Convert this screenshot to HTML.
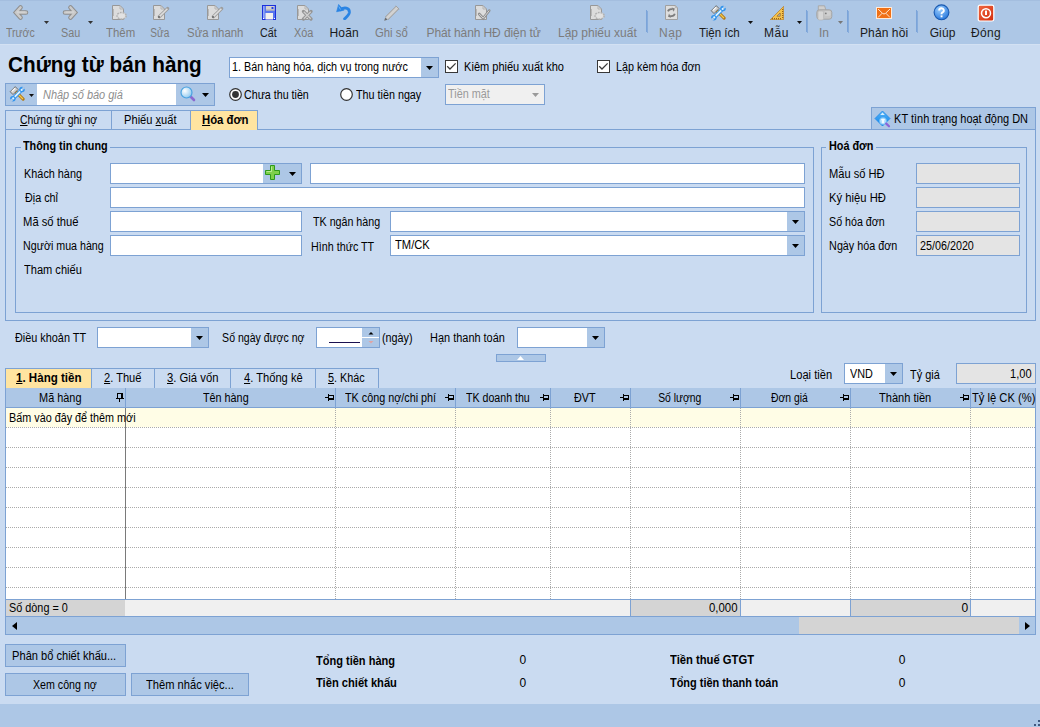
<!DOCTYPE html>
<html><head><meta charset="utf-8"><style>
html,body{margin:0;padding:0;}
body{width:1040px;height:727px;position:relative;overflow:hidden;background:#CADBF1;font-family:"Liberation Sans",sans-serif;}
.a{position:absolute;}
.t{position:absolute;white-space:pre;}
u{text-decoration:underline;text-underline-offset:1px;}
</style></head><body>
<div class="a" style="left:0px;top:0px;width:1040px;height:44px;background:#ADC7E6;"></div>
<div class="a" style="left:0px;top:0px;width:1040px;height:1px;background:#A4BEDF;"></div>
<div class="a" style="left:0px;top:44px;width:1040px;height:1px;background:#D3E1F3;"></div>
<div class="t" style="left:6.00px;top:26.84px;font-size:12px;line-height:12px;font-weight:400;font-style:normal;color:#7C7C7C;transform:scaleX(0.8788);transform-origin:0px 0;">Trước</div>
<div class="t" style="left:61.00px;top:26.84px;font-size:12px;line-height:12px;font-weight:400;font-style:normal;color:#7C7C7C;transform:scaleX(0.9000);transform-origin:1px 0;">Sau</div>
<div class="t" style="left:106.00px;top:26.84px;font-size:12px;line-height:12px;font-weight:400;font-style:normal;color:#7C7C7C;transform:scaleX(0.9500);transform-origin:0px 0;">Thêm</div>
<div class="t" style="left:150.00px;top:26.84px;font-size:12px;line-height:12px;font-weight:400;font-style:normal;color:#7C7C7C;transform:scaleX(0.8409);transform-origin:1px 0;">Sửa</div>
<div class="t" style="left:187.00px;top:26.84px;font-size:12px;line-height:12px;font-weight:400;font-style:normal;color:#7C7C7C;transform:scaleX(0.9483);transform-origin:1px 0;">Sửa nhanh</div>
<div class="t" style="left:260.00px;top:26.84px;font-size:12px;line-height:12px;font-weight:400;font-style:normal;color:#1A1A1A;transform:scaleX(0.8947);transform-origin:0px 0;">Cất</div>
<div class="t" style="left:294.00px;top:26.84px;font-size:12px;line-height:12px;font-weight:400;font-style:normal;color:#7C7C7C;transform:scaleX(0.9091);transform-origin:0px 0;">Xóa</div>
<div class="t" style="left:329.50px;top:26.84px;font-size:12px;line-height:12px;font-weight:400;font-style:normal;color:#1A1A1A;letter-spacing:0.167px;">Hoãn</div>
<div class="t" style="left:375.00px;top:26.84px;font-size:12px;line-height:12px;font-weight:400;font-style:normal;color:#7C7C7C;transform:scaleX(0.9429);transform-origin:0px 0;">Ghi sổ</div>
<div class="t" style="left:426.50px;top:26.84px;font-size:12px;line-height:12px;font-weight:400;font-style:normal;color:#7C7C7C;letter-spacing:-0.100px;">Phát hành HĐ điện tử</div>
<div class="t" style="left:558.00px;top:26.84px;font-size:12px;line-height:12px;font-weight:400;font-style:normal;color:#7C7C7C;">Lập phiếu xuất</div>
<div class="t" style="left:659.00px;top:26.84px;font-size:12px;line-height:12px;font-weight:400;font-style:normal;color:#7C7C7C;letter-spacing:0.500px;">Nạp</div>
<div class="t" style="left:699.00px;top:26.84px;font-size:12px;line-height:12px;font-weight:400;font-style:normal;color:#1A1A1A;transform:scaleX(0.9643);transform-origin:0px 0;">Tiện ích</div>
<div class="t" style="left:764.00px;top:26.84px;font-size:12px;line-height:12px;font-weight:400;font-style:normal;color:#1A1A1A;letter-spacing:0.500px;">Mẫu</div>
<div class="t" style="left:819.00px;top:26.84px;font-size:12px;line-height:12px;font-weight:400;font-style:normal;color:#7C7C7C;">In</div>
<div class="t" style="left:860.00px;top:26.84px;font-size:12px;line-height:12px;font-weight:400;font-style:normal;color:#1A1A1A;letter-spacing:0.100px;">Phản hồi</div>
<div class="t" style="left:929.70px;top:26.84px;font-size:12px;line-height:12px;font-weight:400;font-style:normal;color:#1A1A1A;letter-spacing:0.100px;">Giúp</div>
<div class="t" style="left:971.00px;top:26.84px;font-size:12px;line-height:12px;font-weight:400;font-style:normal;color:#1A1A1A;letter-spacing:0.333px;">Đóng</div>
<div class="a" style="left:646px;top:10px;width:1px;height:22px;background:#7BA4D9;"></div>
<div class="a" style="left:647px;top:11px;width:1px;height:22px;background:#86ACDC;"></div>
<div class="a" style="left:806px;top:10px;width:1px;height:22px;background:#7BA4D9;"></div>
<div class="a" style="left:807px;top:11px;width:1px;height:22px;background:#86ACDC;"></div>
<div class="a" style="left:847px;top:10px;width:1px;height:22px;background:#7BA4D9;"></div>
<div class="a" style="left:848px;top:11px;width:1px;height:22px;background:#86ACDC;"></div>
<div class="a" style="left:916px;top:10px;width:1px;height:22px;background:#7BA4D9;"></div>
<div class="a" style="left:917px;top:11px;width:1px;height:22px;background:#86ACDC;"></div>
<svg class="a" style="left:44px;top:21px" width="5" height="3" viewBox="0 0 5 3"><path d="M0 0H5L2.5 3Z" fill="#333"/></svg>
<svg class="a" style="left:88px;top:21px" width="5" height="3" viewBox="0 0 5 3"><path d="M0 0H5L2.5 3Z" fill="#333"/></svg>
<svg class="a" style="left:748px;top:21px" width="5" height="3" viewBox="0 0 5 3"><path d="M0 0H5L2.5 3Z" fill="#111"/></svg>
<svg class="a" style="left:797px;top:21px" width="5" height="3" viewBox="0 0 5 3"><path d="M0 0H5L2.5 3Z" fill="#111"/></svg>
<svg class="a" style="left:838px;top:21px" width="5" height="3" viewBox="0 0 5 3"><path d="M0 0H5L2.5 3Z" fill="#777"/></svg>
<svg class="a" style="left:10px;top:2px" width="24" height="22" viewBox="0 0 24 22"><g><path d="M10.5 5.5L6 10.5L10.5 15.5M6 10.5H16" fill="none" stroke="#8E8E8E" stroke-width="4.6" stroke-linecap="round" stroke-linejoin="miter"/><path d="M10.5 5.5L6 10.5L10.5 15.5M6 10.5H16" fill="none" stroke="#CACACA" stroke-width="2.6" stroke-linecap="round" stroke-linejoin="miter"/><path d="M7 10H15.5" stroke="#DEDEDE" stroke-width="0.8"/></g></svg>
<svg class="a" style="left:57px;top:2px" width="24" height="22" viewBox="0 0 24 22"><g transform="translate(24 0) scale(-1 1)"><path d="M10.5 5.5L6 10.5L10.5 15.5M6 10.5H16" fill="none" stroke="#8E8E8E" stroke-width="4.6" stroke-linecap="round" stroke-linejoin="miter"/><path d="M10.5 5.5L6 10.5L10.5 15.5M6 10.5H16" fill="none" stroke="#CACACA" stroke-width="2.6" stroke-linecap="round" stroke-linejoin="miter"/><path d="M7 10H15.5" stroke="#DEDEDE" stroke-width="0.8"/></g></svg>
<svg class="a" style="left:112px;top:5px" width="20" height="16" viewBox="0 0 20 16"><path d="M0.5 0.5H8L11.5 4V14.5H0.5Z" fill="#DCDCDC" stroke="#989898"/><path d="M8 0.5V4H11.5" fill="none" stroke="#B4B4B4"/><rect x="1" y="4" width="1" height="7" fill="#B8B8B8"/><ellipse cx="9.6" cy="10.8" rx="4.6" ry="3.4" fill="#D4D4D4" stroke="#B0B0B0" stroke-width="1.4" stroke-dasharray="1.6 1.2"/><ellipse cx="9.6" cy="10.8" rx="3.4" ry="2.3" fill="#E2E2E2"/></svg>
<svg class="a" style="left:153px;top:5px" width="20" height="16" viewBox="0 0 20 16"><path d="M0.5 0.5H8L11.5 4V14.5H0.5Z" fill="#DCDCDC" stroke="#989898"/><path d="M8 0.5V4H11.5" fill="none" stroke="#B4B4B4"/><rect x="1" y="4" width="1" height="7" fill="#B8B8B8"/><path d="M6.4 11.6L14.6 3.6" stroke="#9C9C9C" stroke-width="3.4" stroke-linecap="round"/><path d="M6.6 11.4L14.4 3.8" stroke="#DEDEDE" stroke-width="1.6"/><circle cx="6" cy="12" r="0.9" fill="#666"/></svg>
<svg class="a" style="left:207px;top:5px" width="20" height="16" viewBox="0 0 20 16"><path d="M0.5 0.5H8L11.5 4V14.5H0.5Z" fill="#DCDCDC" stroke="#989898"/><path d="M8 0.5V4H11.5" fill="none" stroke="#B4B4B4"/><rect x="1" y="4" width="1" height="7" fill="#B8B8B8"/><path d="M6.4 11.6L14.6 3.6" stroke="#9C9C9C" stroke-width="3.4" stroke-linecap="round"/><path d="M6.6 11.4L14.4 3.8" stroke="#DEDEDE" stroke-width="1.6"/><circle cx="6" cy="12" r="0.9" fill="#666"/></svg>
<svg class="a" style="left:262px;top:5px" width="14" height="15" viewBox="0 0 14 15"><rect x="0.5" y="0.5" width="13" height="14" fill="#5876EE" stroke="#1C30DC"/><rect x="1" y="1" width="1.6" height="13" fill="#93A8F6"/><rect x="4" y="1" width="8.5" height="4.5" fill="#D6D2CC"/><rect x="4" y="4.5" width="8.5" height="1" fill="#A8A8B8"/><rect x="9.5" y="2" width="2" height="2" rx="0.6" fill="#2040E0"/><rect x="3.5" y="8" width="7.5" height="6.5" fill="#F4F2EE"/><rect x="1" y="13" width="1" height="1" fill="#FFF"/><rect x="12" y="13" width="1" height="1" fill="#FFF"/></svg>
<svg class="a" style="left:297px;top:5px" width="20" height="16" viewBox="0 0 20 16"><path d="M0.5 0.5H8L11.5 4V14.5H0.5Z" fill="#DCDCDC" stroke="#989898"/><path d="M8 0.5V4H11.5" fill="none" stroke="#B4B4B4"/><rect x="1" y="4" width="1" height="7" fill="#B8B8B8"/><path d="M6.5 6.5L14 14M14 6.5L6.5 14" stroke="#959595" stroke-width="3.2" stroke-linecap="round"/><path d="M6.8 6.8L13.7 13.7M13.7 6.8L6.8 13.7" stroke="#CFCFCF" stroke-width="1.3"/></svg>
<svg class="a" style="left:336px;top:3px" width="16" height="17" viewBox="0 0 16 17"><path d="M4.8 6.8C8 3.8 13.6 4.6 13.4 9.4C13.2 12 10.8 13.8 8.6 15.8" fill="none" stroke="#2A84E4" stroke-width="2.8" stroke-linecap="round"/><path d="M0.6 8.8L2.6 1.4L8 7.2Z" fill="#2A84E4" stroke="#2A84E4" stroke-width="0.6" stroke-linejoin="round"/><path d="M2.8 3.5L4.5 6.5" stroke="#7CC0F8" stroke-width="0.8"/></svg>
<svg class="a" style="left:383px;top:4px" width="18" height="18" viewBox="0 0 18 18"><path d="M3.6 14.4L14.6 3.4" stroke="#A2A2A2" stroke-width="4.6"/><path d="M3.8 14.2L14.4 3.6" stroke="#D2D2D2" stroke-width="2.8"/><path d="M12.8 1.8L16.2 5.2" stroke="#A2A2A2" stroke-width="1"/><path d="M1.2 16.8L2.2 13.4L4.6 15.8Z" fill="#6E6E6E"/></svg>
<svg class="a" style="left:475px;top:5px" width="20" height="16" viewBox="0 0 20 16"><path d="M0.5 0.5H8L11.5 4V14.5H0.5Z" fill="#DCDCDC" stroke="#989898"/><path d="M8 0.5V4H11.5" fill="none" stroke="#B4B4B4"/><rect x="1" y="4" width="1" height="7" fill="#B8B8B8"/><path d="M4.2 9L8.2 13.2L14.2 5.6" fill="none" stroke="#8E8E8E" stroke-width="2.6" stroke-linecap="round"/><path d="M4.2 9L8.2 13.2L14.2 5.6" fill="none" stroke="#D4D4D4" stroke-width="1"/></svg>
<svg class="a" style="left:590px;top:5px" width="20" height="16" viewBox="0 0 20 16"><path d="M0.5 0.5H8L11.5 4V14.5H0.5Z" fill="#DCDCDC" stroke="#989898"/><path d="M8 0.5V4H11.5" fill="none" stroke="#B4B4B4"/><rect x="1" y="4" width="1" height="7" fill="#B8B8B8"/><ellipse cx="9.6" cy="10.8" rx="4.6" ry="3.4" fill="#D4D4D4" stroke="#B0B0B0" stroke-width="1.4" stroke-dasharray="1.6 1.2"/><ellipse cx="9.6" cy="10.8" rx="3.4" ry="2.3" fill="#E2E2E2"/></svg>
<svg class="a" style="left:665px;top:5px" width="14" height="16" viewBox="0 0 14 16"><path d="M0.5 0.5H10.3L12.5 2.7V14.5H0.5Z" fill="#DEDEDE" stroke="#A0A0A0"/><path d="M10.3 0.5V2.7H12.5" fill="#C0C0C0" stroke="#B0B0B0" stroke-width="0.8"/><path d="M3 6.4C3.6 4.6 5.6 3.9 7.6 4.3" fill="none" stroke="#7C7C7C" stroke-width="1.8"/><path d="M6.6 2.4L9.8 3.4L8.8 6.8Z" fill="#7C7C7C"/><path d="M9.8 8.8C9.2 10.6 7.2 11.3 5.2 10.9" fill="none" stroke="#7C7C7C" stroke-width="1.8"/><path d="M6.2 12.8L3 11.8L4 8.4Z" fill="#7C7C7C"/></svg>
<svg class="a" style="left:710px;top:4px" width="18" height="18" viewBox="0 0 18 18"><g transform="translate(0.9 0.9) scale(0.92)"><path d="M6.5 6.5L14.4 14.4" stroke="#B27A1A" stroke-width="3.4" stroke-linecap="round"/><path d="M6.8 6.8L14.2 14.2" stroke="#F4CC50" stroke-width="1.3"/><path d="M5.8 0.8L8.9 3.9L3.4 9.4L0.3 6.3Z" fill="#CFCFCF" stroke="#5E5E5E" stroke-width="0.9" stroke-linejoin="round"/><path d="M2.2 6L5.6 2.6" stroke="#FAFAFA" stroke-width="1.3"/><path d="M4.2 13L12.2 5" stroke="#3394EC" stroke-width="4" stroke-linecap="round"/><path d="M4.4 12.8L12 5.2" stroke="#E2F4FF" stroke-width="2"/><circle cx="13.2" cy="4" r="3" fill="#3394EC"/><circle cx="14.7" cy="2.5" r="1.4" fill="#ADC7E6"/><circle cx="3.2" cy="14" r="3" fill="#3394EC"/><circle cx="1.7" cy="15.5" r="1.4" fill="#ADC7E6"/><circle cx="12.8" cy="4.4" r="1.2" fill="#E2F4FF"/><circle cx="3.6" cy="13.6" r="1.2" fill="#E2F4FF"/></g></svg>
<svg class="a" style="left:770px;top:6px" width="14" height="14" viewBox="0 0 14 14"><path d="M0.3 13.7L13.7 0.3V13.7Z" fill="#F4C24E" stroke="#B47A26" stroke-width="0.7" stroke-linejoin="round"/><path d="M7 10.2L10.2 7V10.2Z" fill="#ADC7E6" stroke="#A06A1E" stroke-width="0.8"/><rect x="2" y="12" width="1" height="1.3" fill="#9A6418"/><rect x="4" y="12" width="1" height="1.3" fill="#9A6418"/><rect x="6" y="12" width="1" height="1.3" fill="#9A6418"/><rect x="8" y="12" width="1" height="1.3" fill="#9A6418"/><rect x="10" y="12" width="1" height="1.3" fill="#9A6418"/><rect x="12" y="3" width="1.3" height="1" fill="#9A6418"/><rect x="12" y="5" width="1.3" height="1" fill="#9A6418"/><rect x="12" y="7" width="1.3" height="1" fill="#9A6418"/><rect x="12" y="9" width="1.3" height="1" fill="#9A6418"/><rect x="12" y="11" width="1.3" height="1" fill="#9A6418"/></svg>
<svg class="a" style="left:816px;top:5px" width="17" height="16" viewBox="0 0 17 16"><path d="M2.3 0.8H8.6L10 5.5H2.3Z" fill="#CFCFCF" stroke="#A6A6A6" stroke-width="0.9" stroke-linejoin="round"/><rect x="0.8" y="4.8" width="15" height="9.4" rx="2.6" fill="#C4C4C4" stroke="#A2A2A2" stroke-width="0.9"/><rect x="2" y="6" width="5.6" height="9" rx="1.4" fill="#D6D6D6" stroke="#B4B4B4" stroke-width="0.6"/><rect x="8.6" y="6" width="6" height="4.8" rx="1" fill="#CFCFCF"/><circle cx="9.8" cy="8.4" r="0.9" fill="#7E7E7E"/></svg>
<svg class="a" style="left:876px;top:7px" width="16" height="12" viewBox="0 0 16 12"><rect x="0.5" y="0.5" width="15" height="11" fill="#F07016" stroke="#FFEBDA"/><path d="M2 2L6.6 6.4Q8 7.6 9.4 6.4L14 2M2 10.5L6.2 6.2M14 10.5L9.8 6.2" fill="none" stroke="#FFE4CC" stroke-width="1"/></svg>
<svg class="a" style="left:933px;top:4px" width="17" height="17" viewBox="0 0 17 17"><defs><radialGradient id="hg" cx="0.4" cy="0.3" r="0.8"><stop offset="0" stop-color="#9ED0FF"/><stop offset="1" stop-color="#1C6FD8"/></radialGradient></defs><circle cx="8.5" cy="8.3" r="7.4" fill="url(#hg)" stroke="#1758B0" stroke-width="1.1"/><path d="M6.2 6.4A2.3 2.2 0 1 1 9.2 8.5C8.7 8.9 8.5 9.3 8.5 10.3" fill="none" stroke="#FFF" stroke-width="1.9"/><rect x="7.6" y="11.4" width="1.9" height="1.9" fill="#FFF"/></svg>
<svg class="a" style="left:977px;top:4px" width="18" height="18" viewBox="0 0 18 18"><defs><linearGradient id="cg" x1="0" y1="0" x2="1" y2="1"><stop offset="0" stop-color="#F06A44"/><stop offset="1" stop-color="#D22C0C"/></linearGradient></defs><rect x="1.2" y="1.2" width="15.6" height="15.8" rx="1.8" fill="url(#cg)" stroke="#FFF" stroke-width="1.2"/><circle cx="9" cy="9.2" r="4.5" fill="none" stroke="#FFF" stroke-width="1.5"/><rect x="8" y="6.6" width="2" height="4.4" fill="#FFF"/></svg>
<div class="t" style="left:8.30px;top:53.72px;font-size:21.6px;line-height:21.6px;font-weight:700;font-style:normal;color:#000;transform:scaleX(0.9610);transform-origin:1px 0;">Chứng từ bán hàng</div>
<div class="a" style="left:229px;top:57px;width:210px;height:21px;background:#FFFFFF;box-sizing:border-box;border:1px solid #7DA2D3;"></div>
<div class="a" style="left:421px;top:58px;width:17px;height:19px;background:#ADC7E6;"></div>
<svg class="a" style="left:426px;top:66px" width="7" height="4" viewBox="0 0 7 4"><path d="M0 0H7L3.5 4Z" fill="#000"/></svg>
<div class="t" style="left:232.00px;top:60.84px;font-size:12px;line-height:12px;font-weight:400;font-style:normal;color:#000000;transform:scaleX(0.8995);transform-origin:1px 0;">1. Bán hàng hóa, dịch vụ trong nước</div>
<svg class="a" style="left:445px;top:60px" width="13" height="13" viewBox="0 0 13 13"><rect x="0.5" y="0.5" width="12" height="12" fill="#FFF" stroke="#383838"/><path d="M2.2 6.2L5 9L10.6 3.4" fill="none" stroke="#3A3A3A" stroke-width="1.25"/></svg>
<div class="t" style="left:463.80px;top:60.84px;font-size:12px;line-height:12px;font-weight:400;font-style:normal;color:#000000;transform:scaleX(0.9185);transform-origin:1px 0;">Kiêm phiếu xuất kho</div>
<svg class="a" style="left:597px;top:60px" width="13" height="13" viewBox="0 0 13 13"><rect x="0.5" y="0.5" width="12" height="12" fill="#FFF" stroke="#383838"/><path d="M2.2 6.2L5 9L10.6 3.4" fill="none" stroke="#3A3A3A" stroke-width="1.25"/></svg>
<div class="t" style="left:616.00px;top:60.84px;font-size:12px;line-height:12px;font-weight:400;font-style:normal;color:#000000;transform:scaleX(0.8978);transform-origin:1px 0;">Lập kèm hóa đơn</div>
<div class="a" style="left:5px;top:83px;width:210px;height:23px;background:#FFFFFF;box-sizing:border-box;border:1px solid #7DA2D3;"></div>
<div class="a" style="left:6px;top:84px;width:31px;height:21px;background:#ADC7E6;"></div>
<div class="a" style="left:176px;top:84px;width:38px;height:21px;background:#ADC7E6;"></div>
<svg class="a" style="left:9px;top:85px" width="18" height="18" viewBox="0 0 18 18"><g transform="translate(0.9 0.9) scale(0.92)"><path d="M6.5 6.5L14.4 14.4" stroke="#B27A1A" stroke-width="3.4" stroke-linecap="round"/><path d="M6.8 6.8L14.2 14.2" stroke="#F4CC50" stroke-width="1.3"/><path d="M5.8 0.8L8.9 3.9L3.4 9.4L0.3 6.3Z" fill="#CFCFCF" stroke="#5E5E5E" stroke-width="0.9" stroke-linejoin="round"/><path d="M2.2 6L5.6 2.6" stroke="#FAFAFA" stroke-width="1.3"/><path d="M4.2 13L12.2 5" stroke="#3394EC" stroke-width="4" stroke-linecap="round"/><path d="M4.4 12.8L12 5.2" stroke="#E2F4FF" stroke-width="2"/><circle cx="13.2" cy="4" r="3" fill="#3394EC"/><circle cx="14.7" cy="2.5" r="1.4" fill="#ADC7E6"/><circle cx="3.2" cy="14" r="3" fill="#3394EC"/><circle cx="1.7" cy="15.5" r="1.4" fill="#ADC7E6"/><circle cx="12.8" cy="4.4" r="1.2" fill="#E2F4FF"/><circle cx="3.6" cy="13.6" r="1.2" fill="#E2F4FF"/></g></svg>
<svg class="a" style="left:29px;top:94px" width="5" height="3" viewBox="0 0 5 3"><path d="M0 0H5L2.5 3Z" fill="#111"/></svg>
<div class="t" style="left:43.00px;top:88.84px;font-size:12px;line-height:12px;font-weight:400;font-style:italic;color:#8E8E8E;transform:scaleX(0.9138);transform-origin:0px 0;">Nhập số báo giá</div>
<svg class="a" style="left:180px;top:86px" width="16" height="16" viewBox="0 0 16 16"><defs><radialGradient id="mg" cx="0.35" cy="0.35" r="0.7"><stop offset="0" stop-color="#FFFFFF"/><stop offset="1" stop-color="#8CC8F0"/></radialGradient></defs><path d="M10 10L14 14" stroke="#8A6AD0" stroke-width="2.6" stroke-linecap="round"/><circle cx="6.5" cy="6.5" r="5.5" fill="url(#mg)" stroke="#4AA2E0" stroke-width="1.2"/></svg>
<svg class="a" style="left:202px;top:93px" width="7" height="4" viewBox="0 0 7 4"><path d="M0 0H7L3.5 4Z" fill="#000"/></svg>
<svg class="a" style="left:229px;top:88px" width="13" height="13" viewBox="0 0 13 13"><circle cx="6.5" cy="6.5" r="5.8" fill="#FFF" stroke="#333" stroke-width="1.2"/><circle cx="6.5" cy="6.5" r="3.4" fill="#333"/></svg>
<div class="t" style="left:244.40px;top:88.84px;font-size:12px;line-height:12px;font-weight:400;font-style:normal;color:#000000;transform:scaleX(0.8903);transform-origin:0px 0;">Chưa thu tiền</div>
<svg class="a" style="left:340px;top:88px" width="13" height="13" viewBox="0 0 13 13"><circle cx="6.5" cy="6.5" r="5.8" fill="#FFF" stroke="#333" stroke-width="1.2"/></svg>
<div class="t" style="left:355.50px;top:88.84px;font-size:12px;line-height:12px;font-weight:400;font-style:normal;color:#000000;transform:scaleX(0.8973);transform-origin:0px 0;">Thu tiền ngay</div>
<div class="a" style="left:445px;top:84px;width:100px;height:21px;background:#F0F0F0;box-sizing:border-box;border:1px solid #7DA2D3;"></div>
<svg class="a" style="left:532px;top:93px" width="7" height="4" viewBox="0 0 7 4"><path d="M0 0H7L3.5 4Z" fill="#9A9A9A"/></svg>
<div class="t" style="left:448.00px;top:87.84px;font-size:12px;line-height:12px;font-weight:400;font-style:normal;color:#9A9A9A;transform:scaleX(0.9043);transform-origin:0px 0;">Tiền mặt</div>
<div class="a" style="left:5px;top:129px;width:1031px;height:192px;box-sizing:border-box;border:1px solid #7DA2D3;"></div>
<div class="a" style="left:5px;top:110px;width:107px;height:20px;background:#CADBF1;box-sizing:border-box;border:1px solid #7DA2D3;"></div>
<div class="a" style="left:111px;top:110px;width:80px;height:20px;background:#CADBF1;box-sizing:border-box;border:1px solid #7DA2D3;"></div>
<div class="a" style="left:190px;top:110px;width:68px;height:20px;background:#FFE4A0;box-sizing:border-box;border:1px solid #7DA2D3;"></div>
<div class="a" style="left:191px;top:129px;width:66px;height:1px;background:#FFE4A0;"></div>
<div class="t" style="left:20.00px;top:113.84px;font-size:12px;line-height:12px;font-weight:400;font-style:normal;color:#000000;transform:scaleX(0.8708);transform-origin:0px 0;"><u>C</u>hứng từ ghi nợ</div>
<div class="t" style="left:124.00px;top:113.84px;font-size:12px;line-height:12px;font-weight:400;font-style:normal;color:#000000;transform:scaleX(0.9250);transform-origin:1px 0;">Phiếu <u>x</u>uất</div>
<div class="t" style="left:201.60px;top:113.84px;font-size:12px;line-height:12px;font-weight:700;font-style:normal;color:#000000;transform:scaleX(0.9449);transform-origin:0px 0;"><u>H</u>óa đơn</div>
<div class="a" style="left:871px;top:107px;width:165px;height:23px;background:#ADC7E6;box-sizing:border-box;border:1px solid #7DA2D3;"></div>
<svg class="a" style="left:874px;top:110px" width="18" height="18" viewBox="0 0 18 18"><defs><linearGradient id="kg" x1="0" y1="0" x2="0" y2="1"><stop offset="0" stop-color="#58B4F6"/><stop offset="1" stop-color="#0C84EC"/></linearGradient></defs><path d="M8.5 1L16 8.5L8.5 16L1 8.5Z" fill="url(#kg)" stroke="#1A86E8" stroke-width="0.8" stroke-linejoin="round"/><path d="M8.5 2.6L10.8 5H6.2Z" fill="#D8F0FF"/><circle cx="9" cy="11" r="3.5" fill="#B4E0FF" stroke="#6CBAF2" stroke-width="0.8"/><rect x="8.2" y="9.6" width="1.6" height="3.6" fill="#FFF"/><rect x="7.2" y="9.2" width="3.6" height="1" fill="#FFF"/><path d="M12.2 13.6L15 16.3" stroke="#8A64D8" stroke-width="2.2" stroke-linecap="round"/></svg>
<div class="t" style="left:894.00px;top:112.84px;font-size:12px;line-height:12px;font-weight:400;font-style:normal;color:#000000;transform:scaleX(0.9138);transform-origin:1px 0;">KT tình trạng hoạt động DN</div>
<div class="a" style="left:15px;top:147px;width:799px;height:166px;box-sizing:border-box;border:1px solid #7DA2D3;"></div>
<div class="a" style="left:21px;top:146px;width:89px;height:3px;background:#CADBF1;"></div>
<div class="t" style="left:23.00px;top:139.84px;font-size:12px;line-height:12px;font-weight:700;font-style:normal;color:#000000;transform:scaleX(0.9011);transform-origin:0px 0;">Thông tin chung</div>
<div class="a" style="left:821px;top:147px;width:206px;height:166px;box-sizing:border-box;border:1px solid #7DA2D3;"></div>
<div class="a" style="left:826px;top:146px;width:50px;height:3px;background:#CADBF1;"></div>
<div class="t" style="left:828.75px;top:139.84px;font-size:12px;line-height:12px;font-weight:700;font-style:normal;color:#000000;transform:scaleX(0.9031);transform-origin:0px 0;">Hoá đơn</div>
<div class="t" style="left:23.80px;top:167.84px;font-size:12px;line-height:12px;font-weight:400;font-style:normal;color:#000000;transform:scaleX(0.9032);transform-origin:1px 0;">Khách hàng</div>
<div class="a" style="left:110px;top:163px;width:192px;height:21px;background:#FFFFFF;box-sizing:border-box;border:1px solid #7DA2D3;"></div>
<div class="a" style="left:263px;top:164px;width:38px;height:19px;background:#ADC7E6;"></div>
<svg class="a" style="left:265px;top:165px" width="16" height="16" viewBox="0 0 16 16"><path d="M5.5 0.5H9.5V5.5H14.5V9.5H9.5V14.5H5.5V9.5H0.5V5.5H5.5Z" fill="#7ED04A" stroke="#2E9A1A"/><path d="M6.5 1.5V6.5H1.5" fill="none" stroke="#C8F0A8" stroke-width="0.8"/></svg>
<svg class="a" style="left:289px;top:172px" width="7" height="4" viewBox="0 0 7 4"><path d="M0 0H7L3.5 4Z" fill="#000"/></svg>
<div class="a" style="left:310px;top:163px;width:495px;height:21px;background:#FFFFFF;box-sizing:border-box;border:1px solid #7DA2D3;"></div>
<div class="t" style="left:24.80px;top:191.84px;font-size:12px;line-height:12px;font-weight:400;font-style:normal;color:#000000;transform:scaleX(0.8973);transform-origin:0px 0;">Địa chỉ</div>
<div class="a" style="left:110px;top:187px;width:695px;height:21px;background:#FFFFFF;box-sizing:border-box;border:1px solid #7DA2D3;"></div>
<div class="t" style="left:23.40px;top:215.84px;font-size:12px;line-height:12px;font-weight:400;font-style:normal;color:#000000;transform:scaleX(0.9345);transform-origin:1px 0;">Mã số thuế</div>
<div class="a" style="left:110px;top:211px;width:192px;height:21px;background:#FFFFFF;box-sizing:border-box;border:1px solid #7DA2D3;"></div>
<div class="t" style="left:312.50px;top:215.84px;font-size:12px;line-height:12px;font-weight:400;font-style:normal;color:#000000;transform:scaleX(0.8907);transform-origin:0px 0;">TK ngân hàng</div>
<div class="a" style="left:390px;top:211px;width:415px;height:21px;background:#FFFFFF;box-sizing:border-box;border:1px solid #7DA2D3;"></div>
<div class="a" style="left:787px;top:212px;width:17px;height:19px;background:#ADC7E6;"></div>
<svg class="a" style="left:792px;top:220px" width="7" height="4" viewBox="0 0 7 4"><path d="M0 0H7L3.5 4Z" fill="#000"/></svg>
<div class="t" style="left:23.40px;top:239.84px;font-size:12px;line-height:12px;font-weight:400;font-style:normal;color:#000000;transform:scaleX(0.8899);transform-origin:1px 0;">Người mua hàng</div>
<div class="a" style="left:110px;top:235px;width:192px;height:21px;background:#FFFFFF;box-sizing:border-box;border:1px solid #7DA2D3;"></div>
<div class="t" style="left:311.40px;top:240.84px;font-size:12px;line-height:12px;font-weight:400;font-style:normal;color:#000000;transform:scaleX(0.8943);transform-origin:1px 0;">Hình thức TT</div>
<div class="a" style="left:390px;top:235px;width:415px;height:21px;background:#FFFFFF;box-sizing:border-box;border:1px solid #7DA2D3;"></div>
<div class="a" style="left:787px;top:236px;width:17px;height:19px;background:#ADC7E6;"></div>
<svg class="a" style="left:792px;top:244px" width="7" height="4" viewBox="0 0 7 4"><path d="M0 0H7L3.5 4Z" fill="#000"/></svg>
<div class="t" style="left:395.00px;top:238.84px;font-size:12px;line-height:12px;font-weight:400;font-style:normal;color:#000000;transform:scaleX(0.9324);transform-origin:0px 0;">TM/CK</div>
<div class="t" style="left:24.40px;top:263.84px;font-size:12px;line-height:12px;font-weight:400;font-style:normal;color:#000000;transform:scaleX(0.9218);transform-origin:0px 0;">Tham chiếu</div>
<div class="t" style="left:829.40px;top:167.84px;font-size:12px;line-height:12px;font-weight:400;font-style:normal;color:#000000;transform:scaleX(0.9254);transform-origin:1px 0;">Mẫu số HĐ</div>
<div class="a" style="left:916px;top:163px;width:104px;height:21px;background:#E4E4E4;box-sizing:border-box;border:1px solid #7DA2D3;"></div>
<div class="t" style="left:829.40px;top:191.84px;font-size:12px;line-height:12px;font-weight:400;font-style:normal;color:#000000;transform:scaleX(0.9356);transform-origin:1px 0;">Ký hiệu HĐ</div>
<div class="a" style="left:916px;top:187px;width:104px;height:21px;background:#E4E4E4;box-sizing:border-box;border:1px solid #7DA2D3;"></div>
<div class="t" style="left:829.40px;top:215.84px;font-size:12px;line-height:12px;font-weight:400;font-style:normal;color:#000000;transform:scaleX(0.8885);transform-origin:1px 0;">Số hóa đơn</div>
<div class="a" style="left:916px;top:211px;width:104px;height:21px;background:#E4E4E4;box-sizing:border-box;border:1px solid #7DA2D3;"></div>
<div class="t" style="left:829.40px;top:239.84px;font-size:12px;line-height:12px;font-weight:400;font-style:normal;color:#000000;transform:scaleX(0.8973);transform-origin:1px 0;">Ngày hóa đơn</div>
<div class="a" style="left:916px;top:235px;width:104px;height:21px;background:#E4E4E4;box-sizing:border-box;border:1px solid #7DA2D3;"></div>
<div class="t" style="left:920.20px;top:239.84px;font-size:12px;line-height:12px;font-weight:400;font-style:normal;color:#000000;transform:scaleX(0.8967);transform-origin:0px 0;">25/06/2020</div>
<div class="t" style="left:15.20px;top:331.84px;font-size:12px;line-height:12px;font-weight:400;font-style:normal;color:#000000;transform:scaleX(0.9051);transform-origin:0px 0;">Điều khoản TT</div>
<div class="a" style="left:97px;top:327px;width:112px;height:21px;background:#FFFFFF;box-sizing:border-box;border:1px solid #7DA2D3;"></div>
<div class="a" style="left:191px;top:328px;width:17px;height:19px;background:#ADC7E6;"></div>
<svg class="a" style="left:196px;top:336px" width="7" height="4" viewBox="0 0 7 4"><path d="M0 0H7L3.5 4Z" fill="#000"/></svg>
<div class="t" style="left:222.00px;top:331.84px;font-size:12px;line-height:12px;font-weight:400;font-style:normal;color:#000000;transform:scaleX(0.8774);transform-origin:1px 0;">Số ngày được nợ</div>
<div class="a" style="left:316px;top:327px;width:64px;height:21px;background:#FFFFFF;box-sizing:border-box;border:1px solid #7DA2D3;"></div>
<div class="a" style="left:362px;top:328px;width:17px;height:19px;background:#ADC7E6;"></div>
<div class="a" style="left:362px;top:337px;width:17px;height:1px;background:#FFFFFF;"></div>
<svg class="a" style="left:368px;top:331px" width="6" height="4" viewBox="0 0 6 4"><path d="M0.5 3.5H5.5L3 1Z" fill="#000"/></svg>
<svg class="a" style="left:368px;top:340px" width="6" height="4" viewBox="0 0 6 4"><path d="M0.5 1H5.5L3 3.5Z" fill="#E0A4A4"/></svg>
<div class="a" style="left:329px;top:342px;width:31px;height:1px;background:#1A1050;"></div>
<div class="t" style="left:382.40px;top:331.84px;font-size:12px;line-height:12px;font-weight:400;font-style:normal;color:#000000;transform:scaleX(0.9000);transform-origin:0px 0;">(ngày)</div>
<div class="t" style="left:429.80px;top:331.84px;font-size:12px;line-height:12px;font-weight:400;font-style:normal;color:#000000;transform:scaleX(0.9111);transform-origin:1px 0;">Hạn thanh toán</div>
<div class="a" style="left:517px;top:327px;width:88px;height:21px;background:#FFFFFF;box-sizing:border-box;border:1px solid #7DA2D3;"></div>
<div class="a" style="left:587px;top:328px;width:17px;height:19px;background:#ADC7E6;"></div>
<svg class="a" style="left:592px;top:336px" width="7" height="4" viewBox="0 0 7 4"><path d="M0 0H7L3.5 4Z" fill="#000"/></svg>
<div class="a" style="left:496px;top:354px;width:50px;height:8px;background:#ADC7E6;box-sizing:border-box;border:1px solid #7DA2D3;"></div>
<svg class="a" style="left:517px;top:356px" width="7" height="4" viewBox="0 0 7 4"><path d="M0 4H7L3.5 0Z" fill="#FFF"/></svg>
<div class="a" style="left:5px;top:368px;width:87px;height:21px;background:#FFE4A0;box-sizing:border-box;border:1px solid #7DA2D3;"></div>
<div class="t" style="left:15.90px;top:371.84px;font-size:12px;line-height:12px;font-weight:700;font-style:normal;color:#000000;transform:scaleX(0.9632);transform-origin:0px 0;"><u>1</u>. Hàng tiền</div>
<div class="a" style="left:91px;top:368px;width:64px;height:21px;background:#CADBF1;box-sizing:border-box;border:1px solid #7DA2D3;"></div>
<div class="t" style="left:103.70px;top:371.84px;font-size:12px;line-height:12px;font-weight:400;font-style:normal;color:#000000;transform:scaleX(0.9250);transform-origin:0px 0;"><u>2</u>. Thuế</div>
<div class="a" style="left:154px;top:368px;width:77px;height:21px;background:#CADBF1;box-sizing:border-box;border:1px solid #7DA2D3;"></div>
<div class="t" style="left:166.60px;top:371.84px;font-size:12px;line-height:12px;font-weight:400;font-style:normal;color:#000000;transform:scaleX(0.9407);transform-origin:0px 0;"><u>3</u>. Giá vốn</div>
<div class="a" style="left:230px;top:368px;width:86px;height:21px;background:#CADBF1;box-sizing:border-box;border:1px solid #7DA2D3;"></div>
<div class="t" style="left:243.50px;top:371.84px;font-size:12px;line-height:12px;font-weight:400;font-style:normal;color:#000000;transform:scaleX(0.9286);transform-origin:0px 0;"><u>4</u>. Thống kê</div>
<div class="a" style="left:315px;top:368px;width:64px;height:21px;background:#CADBF1;box-sizing:border-box;border:1px solid #7DA2D3;"></div>
<div class="t" style="left:327.80px;top:371.84px;font-size:12px;line-height:12px;font-weight:400;font-style:normal;color:#000000;transform:scaleX(0.9024);transform-origin:0px 0;"><u>5</u>. Khác</div>
<div class="t" style="left:789.50px;top:368.84px;font-size:12px;line-height:12px;font-weight:400;font-style:normal;color:#000000;transform:scaleX(0.9261);transform-origin:1px 0;">Loại tiền</div>
<div class="a" style="left:844px;top:363px;width:59px;height:21px;background:#FFFFFF;box-sizing:border-box;border:1px solid #7DA2D3;"></div>
<div class="a" style="left:885px;top:364px;width:17px;height:19px;background:#ADC7E6;"></div>
<svg class="a" style="left:890px;top:372px" width="7" height="4" viewBox="0 0 7 4"><path d="M0 0H7L3.5 4Z" fill="#000"/></svg>
<div class="t" style="left:850.00px;top:367.84px;font-size:12px;line-height:12px;font-weight:400;font-style:normal;color:#000000;transform:scaleX(0.9000);transform-origin:0px 0;">VND</div>
<div class="t" style="left:910.00px;top:368.84px;font-size:12px;line-height:12px;font-weight:400;font-style:normal;color:#000000;transform:scaleX(0.9091);transform-origin:0px 0;">Tỷ giá</div>
<div class="a" style="left:956px;top:363px;width:80px;height:21px;background:#E4E4E4;box-sizing:border-box;border:1px solid #7DA2D3;"></div>
<div class="t" style="left:1010.00px;top:367.84px;font-size:12px;line-height:12px;font-weight:400;font-style:normal;color:#000000;transform:scaleX(0.9205);transform-origin:1px 0;">1,00</div>
<div class="a" style="left:5px;top:388px;width:1031px;height:247px;background:#FFFFFF;box-sizing:border-box;border:1px solid #7DA2D3;"></div>
<div class="a" style="left:6px;top:388px;width:1029px;height:19px;background:#ADC7E6;"></div>
<div class="a" style="left:6px;top:407px;width:1029px;height:1px;background:#7DA2D3;"></div>
<div class="a" style="left:6px;top:408px;width:1029px;height:19px;background:#FFFDE6;"></div>
<div class="a" style="left:125px;top:388px;width:1px;height:19px;background:#7DA2D3;"></div>
<div class="a" style="left:335px;top:388px;width:1px;height:19px;background:#7DA2D3;"></div>
<div class="a" style="left:455px;top:388px;width:1px;height:19px;background:#7DA2D3;"></div>
<div class="a" style="left:550px;top:388px;width:1px;height:19px;background:#7DA2D3;"></div>
<div class="a" style="left:630px;top:388px;width:1px;height:19px;background:#7DA2D3;"></div>
<div class="a" style="left:740px;top:388px;width:1px;height:19px;background:#7DA2D3;"></div>
<div class="a" style="left:850px;top:388px;width:1px;height:19px;background:#7DA2D3;"></div>
<div class="a" style="left:970px;top:388px;width:1px;height:19px;background:#7DA2D3;"></div>
<div class="a" style="left:6px;top:427px;width:1029px;height:1px;background-image:repeating-linear-gradient(90deg,#ABABAB 0 1px,transparent 1px 2px)"></div>
<div class="a" style="left:6px;top:447px;width:1029px;height:1px;background-image:repeating-linear-gradient(90deg,#ABABAB 0 1px,transparent 1px 2px)"></div>
<div class="a" style="left:6px;top:467px;width:1029px;height:1px;background-image:repeating-linear-gradient(90deg,#ABABAB 0 1px,transparent 1px 2px)"></div>
<div class="a" style="left:6px;top:487px;width:1029px;height:1px;background-image:repeating-linear-gradient(90deg,#ABABAB 0 1px,transparent 1px 2px)"></div>
<div class="a" style="left:6px;top:507px;width:1029px;height:1px;background-image:repeating-linear-gradient(90deg,#ABABAB 0 1px,transparent 1px 2px)"></div>
<div class="a" style="left:6px;top:527px;width:1029px;height:1px;background-image:repeating-linear-gradient(90deg,#ABABAB 0 1px,transparent 1px 2px)"></div>
<div class="a" style="left:6px;top:547px;width:1029px;height:1px;background-image:repeating-linear-gradient(90deg,#ABABAB 0 1px,transparent 1px 2px)"></div>
<div class="a" style="left:6px;top:567px;width:1029px;height:1px;background-image:repeating-linear-gradient(90deg,#ABABAB 0 1px,transparent 1px 2px)"></div>
<div class="a" style="left:6px;top:587px;width:1029px;height:1px;background-image:repeating-linear-gradient(90deg,#ABABAB 0 1px,transparent 1px 2px)"></div>
<div class="a" style="left:335px;top:408px;width:1px;height:191px;background-image:repeating-linear-gradient(180deg,#ABABAB 0 1px,transparent 1px 2px)"></div>
<div class="a" style="left:455px;top:408px;width:1px;height:191px;background-image:repeating-linear-gradient(180deg,#ABABAB 0 1px,transparent 1px 2px)"></div>
<div class="a" style="left:550px;top:408px;width:1px;height:191px;background-image:repeating-linear-gradient(180deg,#ABABAB 0 1px,transparent 1px 2px)"></div>
<div class="a" style="left:630px;top:408px;width:1px;height:191px;background-image:repeating-linear-gradient(180deg,#ABABAB 0 1px,transparent 1px 2px)"></div>
<div class="a" style="left:740px;top:408px;width:1px;height:191px;background-image:repeating-linear-gradient(180deg,#ABABAB 0 1px,transparent 1px 2px)"></div>
<div class="a" style="left:850px;top:408px;width:1px;height:191px;background-image:repeating-linear-gradient(180deg,#ABABAB 0 1px,transparent 1px 2px)"></div>
<div class="a" style="left:970px;top:408px;width:1px;height:191px;background-image:repeating-linear-gradient(180deg,#ABABAB 0 1px,transparent 1px 2px)"></div>
<div class="a" style="left:125px;top:408px;width:1px;height:209px;background:#7A7A7A;"></div>
<div class="t" style="left:38.75px;top:391.84px;font-size:12px;line-height:12px;font-weight:400;font-style:normal;color:#000000;transform:scaleX(0.9078);transform-origin:1px 0;">Mã hàng</div>
<div class="a" style="left:117px;top:393px;width:6px;height:1px;background:#000;"></div>
<div class="a" style="left:117px;top:393px;width:1px;height:5px;background:#000;"></div>
<div class="a" style="left:121px;top:393px;width:2px;height:5px;background:#000;"></div>
<div class="a" style="left:116px;top:398px;width:8px;height:1px;background:#000;"></div>
<div class="a" style="left:119px;top:399px;width:1px;height:3px;background:#000;"></div>
<div class="t" style="left:202.50px;top:391.84px;font-size:12px;line-height:12px;font-weight:400;font-style:normal;color:#000000;transform:scaleX(0.9000);transform-origin:0px 0;">Tên hàng</div>
<div class="a" style="left:325px;top:397px;width:3px;height:1px;background:#000;"></div>
<div class="a" style="left:328px;top:394px;width:1px;height:7px;background:#000;"></div>
<div class="a" style="left:329px;top:395px;width:5px;height:1px;background:#000;"></div>
<div class="a" style="left:329px;top:398px;width:5px;height:2px;background:#000;"></div>
<div class="a" style="left:333px;top:395px;width:1px;height:5px;background:#000;"></div>
<div class="t" style="left:344.60px;top:391.84px;font-size:12px;line-height:12px;font-weight:400;font-style:normal;color:#000000;transform:scaleX(0.8990);transform-origin:0px 0;">TK công nợ/chi phí</div>
<div class="a" style="left:445px;top:397px;width:3px;height:1px;background:#000;"></div>
<div class="a" style="left:448px;top:394px;width:1px;height:7px;background:#000;"></div>
<div class="a" style="left:449px;top:395px;width:5px;height:1px;background:#000;"></div>
<div class="a" style="left:449px;top:398px;width:5px;height:2px;background:#000;"></div>
<div class="a" style="left:453px;top:395px;width:1px;height:5px;background:#000;"></div>
<div class="t" style="left:465.50px;top:391.84px;font-size:12px;line-height:12px;font-weight:400;font-style:normal;color:#000000;transform:scaleX(0.8847);transform-origin:0px 0;">TK doanh thu</div>
<div class="a" style="left:540px;top:397px;width:3px;height:1px;background:#000;"></div>
<div class="a" style="left:543px;top:394px;width:1px;height:7px;background:#000;"></div>
<div class="a" style="left:544px;top:395px;width:5px;height:1px;background:#000;"></div>
<div class="a" style="left:544px;top:398px;width:5px;height:2px;background:#000;"></div>
<div class="a" style="left:548px;top:395px;width:1px;height:5px;background:#000;"></div>
<div class="t" style="left:573.80px;top:391.84px;font-size:12px;line-height:12px;font-weight:400;font-style:normal;color:#000000;transform:scaleX(0.9000);transform-origin:0px 0;">ĐVT</div>
<div class="a" style="left:620px;top:397px;width:3px;height:1px;background:#000;"></div>
<div class="a" style="left:623px;top:394px;width:1px;height:7px;background:#000;"></div>
<div class="a" style="left:624px;top:395px;width:5px;height:1px;background:#000;"></div>
<div class="a" style="left:624px;top:398px;width:5px;height:2px;background:#000;"></div>
<div class="a" style="left:628px;top:395px;width:1px;height:5px;background:#000;"></div>
<div class="t" style="left:658.20px;top:391.84px;font-size:12px;line-height:12px;font-weight:400;font-style:normal;color:#000000;transform:scaleX(0.8633);transform-origin:1px 0;">Số lượng</div>
<div class="a" style="left:730px;top:397px;width:3px;height:1px;background:#000;"></div>
<div class="a" style="left:733px;top:394px;width:1px;height:7px;background:#000;"></div>
<div class="a" style="left:734px;top:395px;width:5px;height:1px;background:#000;"></div>
<div class="a" style="left:734px;top:398px;width:5px;height:2px;background:#000;"></div>
<div class="a" style="left:738px;top:395px;width:1px;height:5px;background:#000;"></div>
<div class="t" style="left:771.30px;top:391.84px;font-size:12px;line-height:12px;font-weight:400;font-style:normal;color:#000000;transform:scaleX(0.8651);transform-origin:0px 0;">Đơn giá</div>
<div class="a" style="left:840px;top:397px;width:3px;height:1px;background:#000;"></div>
<div class="a" style="left:843px;top:394px;width:1px;height:7px;background:#000;"></div>
<div class="a" style="left:844px;top:395px;width:5px;height:1px;background:#000;"></div>
<div class="a" style="left:844px;top:398px;width:5px;height:2px;background:#000;"></div>
<div class="a" style="left:848px;top:395px;width:1px;height:5px;background:#000;"></div>
<div class="t" style="left:879.20px;top:391.84px;font-size:12px;line-height:12px;font-weight:400;font-style:normal;color:#000000;transform:scaleX(0.9214);transform-origin:0px 0;">Thành tiền</div>
<div class="a" style="left:960px;top:397px;width:3px;height:1px;background:#000;"></div>
<div class="a" style="left:963px;top:394px;width:1px;height:7px;background:#000;"></div>
<div class="a" style="left:964px;top:395px;width:5px;height:1px;background:#000;"></div>
<div class="a" style="left:964px;top:398px;width:5px;height:2px;background:#000;"></div>
<div class="a" style="left:968px;top:395px;width:1px;height:5px;background:#000;"></div>
<div class="t" style="left:972.30px;top:391.84px;font-size:12px;line-height:12px;font-weight:400;font-style:normal;color:#000000;transform:scaleX(0.9324);transform-origin:0px 0;">Tỷ lệ CK (%)</div>
<div class="t" style="left:9.00px;top:411.84px;font-size:12px;line-height:12px;font-weight:400;font-style:normal;color:#000000;transform:scaleX(0.8993);transform-origin:1px 0;">Bấm vào đây để thêm mới</div>
<div class="a" style="left:6px;top:599px;width:1029px;height:1px;background:#7DA2D3;"></div>
<div class="a" style="left:6px;top:600px;width:1029px;height:16px;background:#F0F0F0;"></div>
<div class="a" style="left:6px;top:600px;width:119px;height:16px;background:#D4D4D4;"></div>
<div class="a" style="left:631px;top:600px;width:109px;height:16px;background:#D4D4D4;"></div>
<div class="a" style="left:851px;top:600px;width:119px;height:16px;background:#D4D4D4;"></div>
<div class="a" style="left:630px;top:600px;width:1px;height:16px;background:#7DA2D3;"></div>
<div class="a" style="left:740px;top:600px;width:1px;height:16px;background:#7DA2D3;"></div>
<div class="a" style="left:850px;top:600px;width:1px;height:16px;background:#7DA2D3;"></div>
<div class="a" style="left:970px;top:600px;width:1px;height:16px;background:#7DA2D3;"></div>
<div class="a" style="left:6px;top:616px;width:1029px;height:1px;background:#7DA2D3;"></div>
<div class="t" style="left:9.00px;top:601.84px;font-size:12px;line-height:12px;font-weight:400;font-style:normal;color:#000000;transform:scaleX(0.9016);transform-origin:1px 0;">Số dòng = 0</div>
<div class="t" style="left:709.00px;top:601.84px;font-size:12px;line-height:12px;font-weight:400;font-style:normal;color:#000000;transform:scaleX(0.9500);transform-origin:0px 0;">0,000</div>
<div class="t" style="left:961.50px;top:601.84px;font-size:12px;line-height:12px;font-weight:400;font-style:normal;color:#000000;">0</div>
<div class="a" style="left:6px;top:617px;width:1029px;height:17px;background:#ADC7E6;"></div>
<div class="a" style="left:799px;top:617px;width:220px;height:17px;background:#D4D4D4;"></div>
<svg class="a" style="left:12px;top:622px" width="5" height="8" viewBox="0 0 5 8"><path d="M5 0V8L0 4Z" fill="#000"/></svg>
<svg class="a" style="left:1025px;top:622px" width="5" height="8" viewBox="0 0 5 8"><path d="M0 0V8L5 4Z" fill="#000"/></svg>
<div class="a" style="left:5px;top:644px;width:121px;height:23px;background:#ADC7E6;box-sizing:border-box;border:1px solid #7DA2D3;"></div>
<div class="t" style="left:12.30px;top:649.84px;font-size:12px;line-height:12px;font-weight:400;font-style:normal;color:#000000;transform:scaleX(0.9234);transform-origin:1px 0;">Phân bổ chiết khấu...</div>
<div class="a" style="left:5px;top:673px;width:121px;height:23px;background:#ADC7E6;box-sizing:border-box;border:1px solid #7DA2D3;"></div>
<div class="t" style="left:33.00px;top:678.84px;font-size:12px;line-height:12px;font-weight:400;font-style:normal;color:#000000;transform:scaleX(0.8875);transform-origin:0px 0;">Xem công nợ</div>
<div class="a" style="left:131px;top:673px;width:118px;height:23px;background:#ADC7E6;box-sizing:border-box;border:1px solid #7DA2D3;"></div>
<div class="t" style="left:146.25px;top:678.84px;font-size:12px;line-height:12px;font-weight:400;font-style:normal;color:#000000;transform:scaleX(0.9282);transform-origin:0px 0;">Thêm nhắc việc...</div>
<div class="t" style="left:315.70px;top:654.84px;font-size:12px;line-height:12px;font-weight:700;font-style:normal;color:#000000;transform:scaleX(0.9186);transform-origin:0px 0;">Tổng tiền hàng</div>
<div class="t" style="left:315.70px;top:676.84px;font-size:12px;line-height:12px;font-weight:700;font-style:normal;color:#000000;transform:scaleX(0.9287);transform-origin:0px 0;">Tiền chiết khấu</div>
<div class="t" style="left:519.40px;top:653.84px;font-size:12px;line-height:12px;font-weight:400;font-style:normal;color:#000000;">0</div>
<div class="t" style="left:519.40px;top:676.84px;font-size:12px;line-height:12px;font-weight:400;font-style:normal;color:#000000;">0</div>
<div class="t" style="left:669.50px;top:653.84px;font-size:12px;line-height:12px;font-weight:700;font-style:normal;color:#000000;transform:scaleX(0.9361);transform-origin:0px 0;">Tiền thuế GTGT</div>
<div class="t" style="left:669.50px;top:676.84px;font-size:12px;line-height:12px;font-weight:700;font-style:normal;color:#000000;transform:scaleX(0.9110);transform-origin:0px 0;">Tổng tiền thanh toán</div>
<div class="t" style="left:898.75px;top:653.84px;font-size:12px;line-height:12px;font-weight:400;font-style:normal;color:#000000;">0</div>
<div class="t" style="left:898.75px;top:676.84px;font-size:12px;line-height:12px;font-weight:400;font-style:normal;color:#000000;">0</div>
<div class="a" style="left:0px;top:704px;width:1040px;height:23px;background:#ADC7E6;"></div>
<div class="a" style="left:1038px;top:720px;width:2px;height:2px;background:#405880;"></div>
<div class="a" style="left:1034px;top:724px;width:2px;height:2px;background:#405880;"></div>
<div class="a" style="left:1038px;top:724px;width:2px;height:2px;background:#405880;"></div>
</body></html>
